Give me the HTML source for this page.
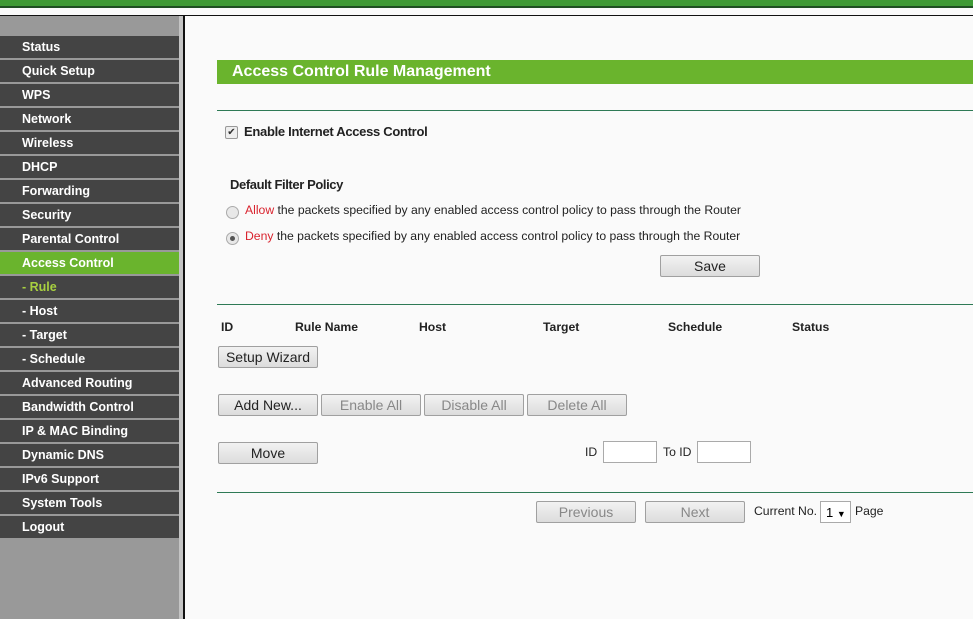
<!DOCTYPE html><html><head><style>
body{margin:0;width:973px;height:619px;overflow:hidden;background:#fafafa;font-family:"Liberation Sans",Arial,sans-serif;position:relative}
.a{position:absolute}
.top{left:0;top:0;width:973px;height:6px;background:#3f9a35}
.top2{left:0;top:6px;width:973px;height:2px;background:#1f4f22}
.blk{left:0;top:15px;width:973px;height:1px;background:#111}
.side{left:0;top:16px;width:179px;height:603px;background:#999}
.strip{left:179px;top:16px;width:4px;height:603px;background:#c4c4c4}
.vl{left:183px;top:16px;width:2px;height:603px;background:#111}
.m{position:absolute;left:0;width:179px;height:22px;background:#444;color:#fff;font-size:12.5px;font-weight:bold;line-height:22px;padding-left:22px;box-sizing:border-box}
.t{font-size:12.2px;color:#222;position:absolute}
.b{position:absolute;height:22px;border:1px solid #a0a0a0;background:linear-gradient(#f2f2f2,#dcdcdc);font-size:14px;color:#222;text-align:center;line-height:21px;box-sizing:border-box;border-radius:2px}
.d{color:#888}
.hl{position:absolute;left:217px;width:756px;height:1px;background:#2e7a55}
.inp{position:absolute;height:22px;border:1px solid #aaa;background:#fff;box-sizing:border-box}
</style></head><body>
<div class="a top"></div><div class="a top2"></div><div class="a blk"></div>
<div class="a side"></div><div class="a strip"></div><div class="a vl"></div>
<div class="m" style="top:36px">Status</div>
<div class="m" style="top:60px">Quick Setup</div>
<div class="m" style="top:84px">WPS</div>
<div class="m" style="top:108px">Network</div>
<div class="m" style="top:132px">Wireless</div>
<div class="m" style="top:156px">DHCP</div>
<div class="m" style="top:180px">Forwarding</div>
<div class="m" style="top:204px">Security</div>
<div class="m" style="top:228px">Parental Control</div>
<div class="m" style="top:252px;background:#6ab42d">Access Control</div>
<div class="m" style="top:276px;color:#a8d040">- Rule</div>
<div class="m" style="top:300px">- Host</div>
<div class="m" style="top:324px">- Target</div>
<div class="m" style="top:348px">- Schedule</div>
<div class="m" style="top:372px">Advanced Routing</div>
<div class="m" style="top:396px">Bandwidth Control</div>
<div class="m" style="top:420px">IP &amp; MAC Binding</div>
<div class="m" style="top:444px">Dynamic DNS</div>
<div class="m" style="top:468px">IPv6 Support</div>
<div class="m" style="top:492px">System Tools</div>
<div class="m" style="top:516px">Logout</div>

<div class="a" style="left:217px;top:60px;width:756px;height:24px;background:#6ab42d;color:#fff;font-weight:bold;font-size:16px;line-height:24px;padding-left:15px;box-sizing:border-box">Access Control Rule Management</div>
<div class="hl" style="top:110px"></div>
<div class="a" style="left:225px;top:126px;width:11px;height:11px;border:1px solid #999;border-radius:2px;background:#eee;font-size:10px;line-height:11px;text-align:center;color:#333">✔</div>
<div class="t" style="left:244px;top:124px;font-size:13px;font-weight:bold;letter-spacing:-0.3px">Enable Internet Access Control</div>
<div class="t" style="left:230px;top:177px;font-size:13px;font-weight:bold;letter-spacing:-0.4px">Default Filter Policy</div>
<div class="a" style="left:226px;top:206px;width:11px;height:11px;border:1px solid #aaa;border-radius:50%;background:#e8e8e8"></div>
<div class="t" style="left:245px;top:203px"><span style="color:#d9232e">Allow</span> the packets specified by any enabled access control policy to pass through the Router</div>
<div class="a" style="left:226px;top:232px;width:11px;height:11px;border:1px solid #aaa;border-radius:50%;background:#e8e8e8"><div style="margin:3px;width:5px;height:5px;border-radius:50%;background:#555"></div></div>
<div class="t" style="left:245px;top:229px"><span style="color:#d9232e">Deny</span> the packets specified by any enabled access control policy to pass through the Router</div>
<div class="b" style="left:660px;top:255px;width:100px">Save</div>
<div class="hl" style="top:304px"></div>
<div class="t" style="left:221px;top:320px;font-weight:bold">ID</div>
<div class="t" style="left:295px;top:320px;font-weight:bold">Rule Name</div>
<div class="t" style="left:419px;top:320px;font-weight:bold">Host</div>
<div class="t" style="left:543px;top:320px;font-weight:bold">Target</div>
<div class="t" style="left:668px;top:320px;font-weight:bold">Schedule</div>
<div class="t" style="left:792px;top:320px;font-weight:bold">Status</div>
<div class="b" style="left:218px;top:346px;width:100px">Setup Wizard</div>
<div class="b" style="left:218px;top:394px;width:100px">Add New...</div>
<div class="b d" style="left:321px;top:394px;width:100px">Enable All</div>
<div class="b d" style="left:424px;top:394px;width:100px">Disable All</div>
<div class="b d" style="left:527px;top:394px;width:100px">Delete All</div>
<div class="b" style="left:218px;top:442px;width:100px">Move</div>
<div class="t" style="left:585px;top:445px">ID</div>
<div class="inp" style="left:603px;top:441px;width:54px"></div>
<div class="t" style="left:663px;top:445px">To ID</div>
<div class="inp" style="left:697px;top:441px;width:54px"></div>
<div class="hl" style="top:492px"></div>
<div class="b d" style="left:536px;top:501px;width:100px">Previous</div>
<div class="b d" style="left:645px;top:501px;width:100px">Next</div>
<div class="t" style="left:754px;top:504px">Current No.</div>
<div class="inp" style="left:820px;top:501px;width:31px;font-size:13px;line-height:21px;padding-left:5px">1 <span style="font-size:9px">▼</span></div>
<div class="t" style="left:855px;top:504px">Page</div>
</body></html>
